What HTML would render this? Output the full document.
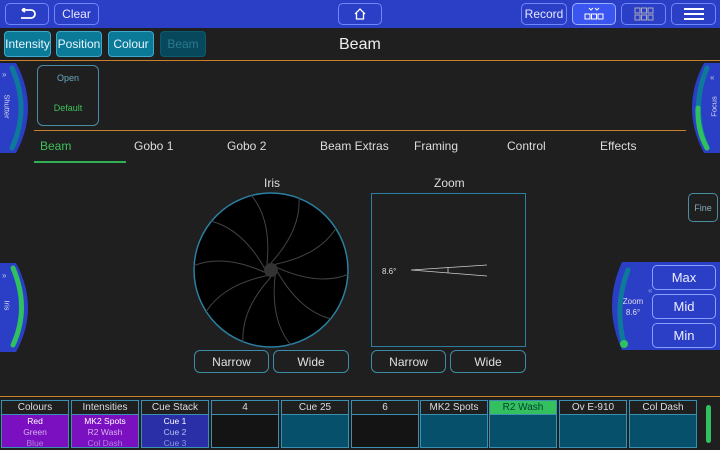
<!DOCTYPE html>
<html><head><meta charset="utf-8"><style>
*{box-sizing:border-box;margin:0;padding:0}
body{width:720px;height:450px;background:#1f1f1f;font-family:"Liberation Sans",sans-serif;color:#ddd;position:relative;overflow:hidden;font-size:12px}
.a{position:absolute}
.tb{left:0;top:0;width:720px;height:28px;background:#2b3ec6}
.tbtn{position:absolute;top:3px;height:22px;border:1px solid #6f86ff;border-radius:5px;background:#2b3ec6;color:#e6e8ff;font-size:12px;display:flex;align-items:center;justify-content:center}
.cat{position:absolute;top:31px;height:26px;border:1px solid #3ea9c9;border-radius:4px;background:#0b7a98;color:#e8f6ff;font-size:12px;display:flex;align-items:center;justify-content:center}
.tab{position:absolute;top:139px;font-size:12px;color:#ddd}
.btn{position:absolute;height:23px;border:1px solid #3f8aa6;border-radius:6px;color:#e0e0e0;font-size:12px;display:flex;align-items:center;justify-content:center}
.cell{position:absolute;top:400px;width:68px;height:48px;border:1px solid #3b8fb0;background:#06506b}
.cell .h{height:14px;background:#1f1f1f;border-bottom:1px solid #3b8fb0;color:#ddd;font-size:10px;text-align:center;line-height:13px}
.cell .b{font-size:8.5px;text-align:center;line-height:11px;padding-top:1px}
.zb{position:absolute;left:652px;width:64px;height:25px;border:1px solid #8aa0ff;border-radius:5px;color:#eef;font-size:13px;display:flex;align-items:center;justify-content:center;background:#2b3ec6}
</style></head><body>
<div class="a tb"></div>
<div class="tbtn" style="left:5px;width:44px"><svg width="18" height="12" viewBox="0 0 18 12"><path d="M4 2H13a4 4 0 0 1 0 8H3M4 2L7 0M4 2L7 4" stroke="#fff" stroke-width="1.8" fill="none"/></svg></div>
<div class="tbtn" style="left:54px;width:45px">Clear</div>
<div class="tbtn" style="left:338px;width:44px"><svg width="14" height="14" viewBox="0 0 14 14"><path d="M2 7L7 2L12 7M3.5 6V12H10.5V6" stroke="#fff" stroke-width="1.3" fill="none"/></svg></div>
<div class="tbtn" style="left:521px;width:46px">Record</div>
<div class="tbtn" style="left:572px;width:44px;background:#3a55f0;border-color:#9ab0ff"><svg width="22" height="14" viewBox="0 0 22 14"><path d="M6 1l2 2 2-2M12 1l2 2 2-2" stroke="#fff" fill="none"/><rect x="2" y="7" width="5" height="5" stroke="#fff" fill="none"/><rect x="8.5" y="7" width="5" height="5" stroke="#fff" fill="none"/><rect x="15" y="7" width="5" height="5" stroke="#fff" fill="none"/></svg></div>
<div class="tbtn" style="left:621px;width:45px"><svg width="22" height="14" viewBox="0 0 22 14"><g fill="none" stroke="#aab"><rect x="2" y="1" width="5" height="5"/><rect x="8.5" y="1" width="5" height="5"/><rect x="15" y="1" width="5" height="5"/><rect x="2" y="8" width="5" height="5"/><rect x="8.5" y="8" width="5" height="5"/><rect x="15" y="8" width="5" height="5"/></g></svg></div>
<div class="tbtn" style="left:671px;width:45px"><svg width="20" height="14" viewBox="0 0 20 14"><path d="M0 2H20M0 7H20M0 12H20" stroke="#fff" stroke-width="2"/></svg></div>

<div class="cat" style="left:4px;width:47px">Intensity</div>
<div class="cat" style="left:56px;width:46px">Position</div>
<div class="cat" style="left:108px;width:46px">Colour</div>
<div class="cat" style="left:160px;width:46px;background:#08485c;border-color:#0b5a70;color:#2a7a8e">Beam</div>
<div class="a" style="left:339px;top:36px;font-size:16px;color:#eee">Beam</div>
<div class="a" style="left:0;top:60px;width:720px;height:1px;background:#c8802a"></div>

<div class="a" style="left:37px;top:65px;width:62px;height:61px;border:1px solid #4a8ea6;border-radius:6px"></div>
<div class="a" style="left:37px;top:73px;width:62px;text-align:center;font-size:9px;color:#6aa8c0">Open</div>
<div class="a" style="left:37px;top:103px;width:62px;text-align:center;font-size:9px;color:#3fc05c">Default</div>
<div class="a" style="left:34px;top:130px;width:652px;height:1px;background:#c8802a"></div>

<div class="tab" style="left:40px;color:#3fc05c">Beam</div>
<div class="a" style="left:34px;top:161px;width:92px;height:2px;background:#2fb054"></div>
<div class="tab" style="left:134px">Gobo 1</div>
<div class="tab" style="left:227px">Gobo 2</div>
<div class="tab" style="left:320px">Beam Extras</div>
<div class="tab" style="left:414px">Framing</div>
<div class="tab" style="left:507px">Control</div>
<div class="tab" style="left:600px">Effects</div>

<svg class="a" style="left:0;top:60px" width="40" height="100"><path d="M0 3H16Q40 48 16 93H0Z" fill="#2b3ec6"/><path d="M12 8Q30 48 12 88" stroke="#0e7a9a" stroke-width="5" fill="none" stroke-linecap="round"/><text x="2" y="17" fill="#bcd" font-size="8">»</text></svg>
<div class="a" style="left:-10px;top:102px;transform:rotate(90deg);font-size:7.5px;color:#dde;width:34px;text-align:center">Shutter</div>
<svg class="a" style="left:0;top:260px" width="40" height="96"><path d="M0 3H16Q40 48 16 92H0Z" fill="#2b3ec6"/><path d="M13 8Q30 48 13 85" stroke="#2fc060" stroke-width="5" fill="none" stroke-linecap="round"/><text x="2" y="18" fill="#bcd" font-size="8">»</text></svg>
<div class="a" style="left:-10px;top:301px;transform:rotate(90deg);font-size:7.5px;color:#dde;width:34px;text-align:center">Iris</div>
<svg class="a" style="left:680px;top:60px" width="40" height="100"><path d="M40 3H24Q0 48 24 93H40Z" fill="#2b3ec6"/><path d="M27 8Q10 48 27 88" stroke="#0e7a9a" stroke-width="5" fill="none" stroke-linecap="round"/><path d="M18 48Q17 70 27 88" stroke="#2fc060" stroke-width="5" fill="none" stroke-linecap="round"/><text x="30" y="20" fill="#bcd" font-size="8">«</text></svg>
<div class="a" style="left:697px;top:102px;transform:rotate(-90deg);font-size:7.5px;color:#dde;width:34px;text-align:center">Focus</div>

<div class="a" style="left:688px;top:193px;width:30px;height:29px;border:1px solid #4a8ea6;border-radius:5px;font-size:9px;color:#8ab;display:flex;align-items:center;justify-content:center">Fine</div>

<svg class="a" style="left:600px;top:260px" width="120" height="92"><path d="M120 2H22Q2 46 22 90H120Z" fill="#2b3ec6"/><path d="M28 10Q14 46 24 84" stroke="#0e7a9a" stroke-width="5" fill="none" stroke-linecap="round"/><circle cx="24" cy="84" r="4" fill="#2fc060"/><text x="48" y="33" fill="#8fa0e0" font-size="8">«</text><text x="33" y="44" fill="#dde" font-size="8" text-anchor="middle">Zoom</text><text x="33" y="55" fill="#dde" font-size="8" text-anchor="middle">8.6°</text></svg>
<div class="zb" style="top:265px">Max</div>
<div class="zb" style="top:294px">Mid</div>
<div class="zb" style="top:323px">Min</div>

<div class="a" style="left:264px;top:176px;font-size:12px">Iris</div>
<svg class="a" style="left:190px;top:189px" width="162" height="162" viewBox="-81 -81 162 162">
<circle r="77" fill="#000" stroke="#2b7fa0" stroke-width="1.5"/>
<g stroke="#444" stroke-width="1" fill="none">
<path d="M0 -7Q30 -40 28 -72"/>
<path d="M0 -7Q30 -40 28 -72" transform="rotate(36)"/>
<path d="M0 -7Q30 -40 28 -72" transform="rotate(72)"/>
<path d="M0 -7Q30 -40 28 -72" transform="rotate(108)"/>
<path d="M0 -7Q30 -40 28 -72" transform="rotate(144)"/>
<path d="M0 -7Q30 -40 28 -72" transform="rotate(180)"/>
<path d="M0 -7Q30 -40 28 -72" transform="rotate(216)"/>
<path d="M0 -7Q30 -40 28 -72" transform="rotate(252)"/>
<path d="M0 -7Q30 -40 28 -72" transform="rotate(288)"/>
<path d="M0 -7Q30 -40 28 -72" transform="rotate(324)"/>
</g>
<circle r="7" fill="#333"/>
</svg>
<div class="btn" style="left:194px;top:350px;width:75px">Narrow</div>
<div class="btn" style="left:273px;top:350px;width:76px">Wide</div>

<div class="a" style="left:434px;top:176px;font-size:12px">Zoom</div>
<div class="a" style="left:371px;top:193px;width:155px;height:154px;border:1.5px solid #2b7fa0"></div>
<svg class="a" style="left:371px;top:193px" width="155" height="154"><text x="11" y="81" fill="#ddd" font-size="8">8.6°</text><path d="M40 77L116 72M40 77L116 83M77 74V80" stroke="#ccc" stroke-width="0.8" fill="none"/></svg>
<div class="btn" style="left:371px;top:350px;width:75px">Narrow</div>
<div class="btn" style="left:450px;top:350px;width:76px">Wide</div>

<div class="a" style="left:0;top:396px;width:720px;height:1px;background:#c8802a"></div>
<div class="cell" style="left:1px;background:#7a10c0"><div class="h">Colours</div><div class="b"><div style="color:#fff">Red</div><div style="color:#d9b0f0">Green</div><div style="color:#b080e0">Blue</div></div></div>
<div class="cell" style="left:71px;background:#7a10c0"><div class="h">Intensities</div><div class="b"><div style="color:#fff">MK2 Spots</div><div style="color:#d9b0f0">R2 Wash</div><div style="color:#b080e0">Col Dash</div></div></div>
<div class="cell" style="left:141px;background:#2a2fa8"><div class="h">Cue Stack</div><div class="b"><div style="color:#fff">Cue 1</div><div style="color:#b8c0f0">Cue 2</div><div style="color:#8a94d8">Cue 3</div></div></div>
<div class="cell" style="left:211px;background:#141414"><div class="h">4</div></div>
<div class="cell" style="left:281px"><div class="h">Cue 25</div></div>
<div class="cell" style="left:351px;background:#141414"><div class="h">6</div></div>
<div class="cell" style="left:420px"><div class="h">MK2 Spots</div></div>
<div class="cell" style="left:489px"><div class="h" style="background:#35c060;color:#043">R2 Wash</div></div>
<div class="cell" style="left:559px"><div class="h">Ov E-910</div></div>
<div class="cell" style="left:629px"><div class="h">Col Dash</div></div>
<div class="a" style="left:706px;top:405px;width:5px;height:38px;background:#2fc060;border-radius:3px"></div>
</body></html>
